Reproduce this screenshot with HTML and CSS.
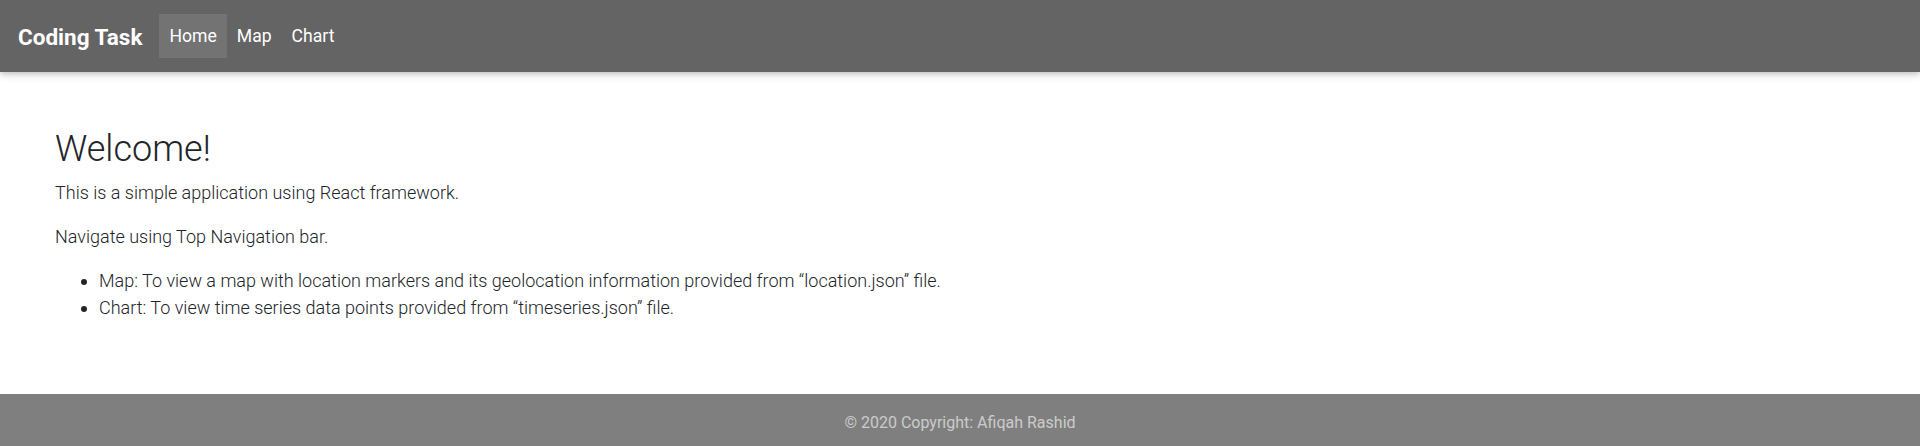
FILE: index.html
```html
<!DOCTYPE html>
<html lang="en">
<head>
<meta charset="utf-8">
<title>Coding Task</title>
<link rel="stylesheet" href="styles.css">
</head>
<body>
<nav class="navbar">
  <a class="brand" href="#">Coding Task</a>
  <ul class="nav">
    <li><a class="nav-link active" href="#">Home</a></li>
    <li><a class="nav-link" href="#">Map</a></li>
    <li><a class="nav-link" href="#">Chart</a></li>
  </ul>
</nav>
<main class="main">
  <h1 class="title">Welcome!</h1>
  <p class="text">This is a simple application using React framework.</p>
  <p class="text">Navigate using Top Navigation bar.</p>
  <ul class="list">
    <li>Map: To view a map with location markers and its geolocation information provided from “location.json” file.</li>
    <li>Chart: To view time series data points provided from “timeseries.json” file.</li>
  </ul>
</main>
<footer class="footer">© 2020 Copyright: Afiqah Rashid</footer>
</body>
</html>
```
FILE: styles.css
```css
* { box-sizing: border-box; }
html, body { margin: 0; padding: 0; }
body {
  font-family: Roboto, "Liberation Sans", sans-serif;
  font-weight: 300;
  font-size: 18px;
  line-height: 27px;
  color: #212529;
  background: #fff;
  min-height: 100vh;
  display: flex;
  flex-direction: column;
}
.navbar {
  height: 72px;
  flex: none;
  background: #646464;
  display: flex;
  align-items: center;
  padding: 0 18px;
  box-shadow: 0 2px 5px 0 rgba(0,0,0,.16), 0 2px 10px 0 rgba(0,0,0,.12);
  position: relative;
  z-index: 1;
}
.brand {
  color: #fff;
  text-decoration: none;
  font-weight: 700;
  font-size: 22.5px;
  line-height: 1.5;
  padding-top: 4px;
  margin-right: 17px;
}
.nav {
  list-style: none;
  margin: 0;
  padding: 0;
  display: flex;
}
.nav-link {
  display: block;
  color: #fff;
  text-decoration: none;
  font-weight: 400;
  font-size: 17.6px;
  line-height: 26.4px;
  padding: 9px 10px;
}
.nav-link.active { background: rgba(255,255,255,.1); }
.main {
  flex: 1;
  padding: 56px 55px 0;
}
.title {
  font-size: 36px;
  font-weight: 300;
  line-height: 1.2;
  margin: 0 0 8px;
}
.text { margin: 0 0 17px; }
.list {
  margin: 0;
  padding-left: 44px;
}
.footer {
  flex: none;
  background: #7f7f7f;
  color: rgba(255,255,255,.6);
  text-align: center;
  font-size: 16px;
  font-weight: 400;
  line-height: 24px;
  padding: 17px 0 11px;
}
```
